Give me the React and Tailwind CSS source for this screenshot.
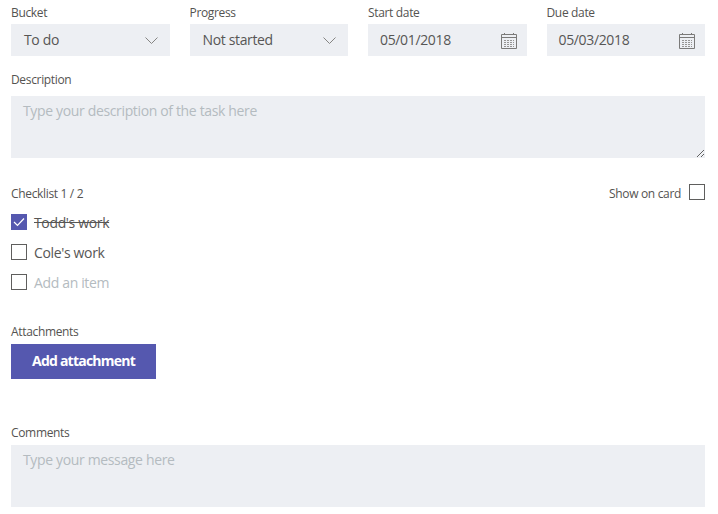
import React from 'react';

const labelText = 'text-[12px] tracking-[-0.028em] text-[#545351]';
const labelClass = `block leading-4 ${labelText}`;
const inputClass = 'block w-full bg-[#edeff3] text-[14px] leading-5 tracking-[-0.025em] text-[#575655] outline-none placeholder:text-[#b4bbc0]';

function Chevron() {
  return (
    <svg width="13" height="7" viewBox="0 0 13 7" fill="none">
      <path d="M.5.5l6 6 6-6" stroke="#858482" strokeWidth="1" />
    </svg>
  );
}

function Calendar() {
  return (
    <svg width="18" height="17" viewBox="0 0 18 17" fill="none">
      <path d="M1.5 2.5h15v14h-15z" stroke="#7b7a79" />
      <path d="M1.5 5.5h15" stroke="#7b7a79" />
      <path d="M4.5 1v2M13.5 1v2" stroke="#7b7a79" />
      <path d="M4 8.5h10M4 10.5h10M4 12.5h10M4 14.5h10" stroke="#969594" strokeDasharray="2 1" />
    </svg>
  );
}

function Select({ label, value }) {
  return (
    <div>
      <span className={`${labelClass} h-6 pt-[5px]`}>{label}</span>
      <div className="flex h-8 items-center justify-between bg-[#edeff3] pl-[13px] pr-3 text-[14px] tracking-[-0.025em] text-[#575655]">
        <span className="-mt-px">{value}</span>
        <Chevron />
      </div>
    </div>
  );
}

function DateField({ label, value }) {
  return (
    <div>
      <span className={`${labelClass} h-6 pt-[5px]`}>{label}</span>
      <div className="flex h-8 items-center justify-between bg-[#edeff3] pl-3 pr-[9px] text-[14px] tracking-[-0.025em] text-[#575655]">
        <span className="-mt-px">{value}</span>
        <Calendar />
      </div>
    </div>
  );
}

function Box({ checked }) {
  if (checked) {
    return (
      <span className="flex h-4 w-4 shrink-0 items-center justify-center bg-[#5558af]">
        <svg width="12" height="10" viewBox="0 0 12 10" fill="none">
          <path d="M1 5l3.5 3.5L11 1.5" stroke="#fff" strokeWidth="1.2" />
        </svg>
      </span>
    );
  }
  return <span className="h-4 w-4 shrink-0 border border-[#5f5e5d] bg-white" />;
}

export default function App() {
  return (
    <div className="h-[514px] w-[718px] overflow-hidden bg-white pl-[11px] pr-[13px] font-['Open_Sans','Liberation_Sans',sans-serif]">
      <div className="grid grid-cols-4 gap-5">
        <Select label="Bucket" value="To do" />
        <Select label="Progress" value="Not started" />
        <DateField label="Start date" value="05/01/2018" />
        <DateField label="Due date" value="05/03/2018" />
      </div>

      <label className={`${labelClass} mt-4 mb-2`}>Description</label>
      <textarea
        className={`${inputClass} h-[62px] px-3 py-[5px]`}
        placeholder="Type your description of the task here"
      />

      <div className="mt-[26px] flex h-4 items-center justify-between">
        <span className={`h-4 leading-5 ${labelText}`}>Checklist 1 / 2</span>
        <div className="flex items-center gap-2">
          <span className={`h-4 leading-[19px] ${labelText}`}>Show on card</span>
          <Box />
        </div>
      </div>

      <ul className="mt-[14px] flex flex-col gap-[14px] text-[14px] tracking-[-0.025em]">
        <li className="flex h-4 items-center gap-[7px] text-[#575655]">
          <Box checked />
          <span className="h-4 leading-[18px] line-through">Todd's work</span>
        </li>
        <li className="flex h-4 items-center gap-[7px] text-[#575655]">
          <Box />
          <span className="h-4 leading-[18px]">Cole's work</span>
        </li>
        <li className="flex h-4 items-center gap-[7px] text-[#b4bbc0]">
          <Box />
          <span className="h-4 leading-[18px]">Add an item</span>
        </li>
      </ul>

      <label className={`${labelClass} mt-[34px] mb-[4px]`}>Attachments</label>
      <button className="block h-[35px] w-[145px] bg-[#5558af] pb-[2px] text-[14px] font-bold tracking-[-0.055em] text-white">
        Add attachment
      </button>

      <label className={`${labelClass} mt-[46px] mb-[4px]`}>Comments</label>
      <div className="h-[62px] bg-[#edeff3] px-3 py-[5px] text-[14px] leading-5 tracking-[-0.025em] text-[#b4bbc0]">
        Type your message here
      </div>
    </div>
  );
}
